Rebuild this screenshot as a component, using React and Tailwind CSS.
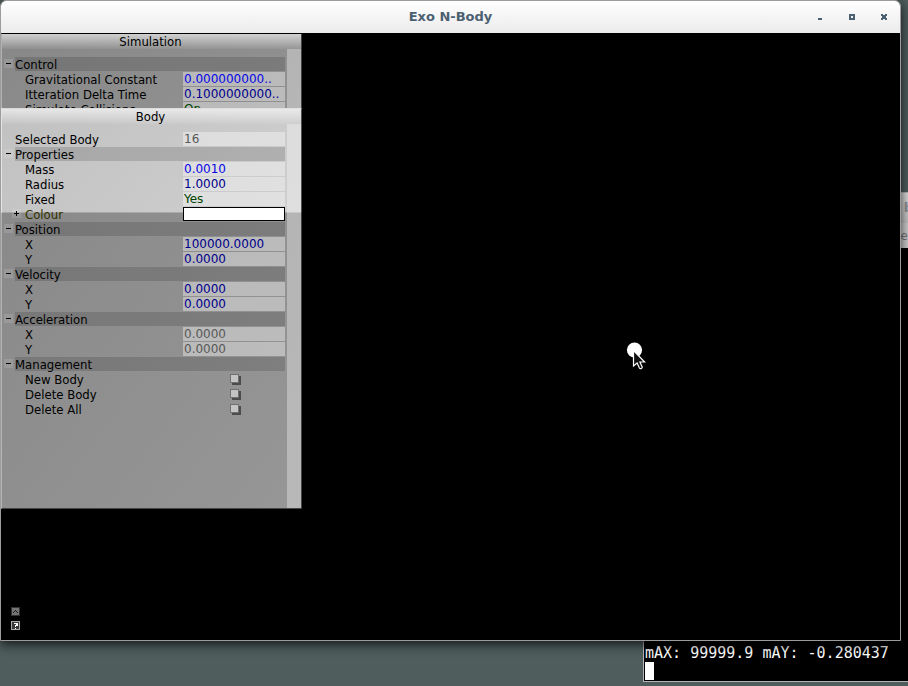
import React from "react";

const simulationRows = [
  { kind: "group", label: "Control" },
  { kind: "number", label: "Gravitational Constant", value: "0.000000000..", tone: "bright" },
  { kind: "number", label: "Itteration Delta Time", value: "0.1000000000..", tone: "blue" },
  { kind: "toggle", label: "Simulate Collisions", value: "On" },
];

const bodyRows = [
  { kind: "number", label: "Selected Body", value: "16", tone: "muted", top: true },
  { kind: "group", label: "Properties" },
  { kind: "number", label: "Mass", value: "0.0010", tone: "bright" },
  { kind: "number", label: "Radius", value: "1.0000", tone: "blue" },
  { kind: "toggle", label: "Fixed", value: "Yes" },
  { kind: "colour", label: "Colour" },
  { kind: "group", label: "Position" },
  { kind: "number", label: "X", value: "100000.0000", tone: "blue" },
  { kind: "number", label: "Y", value: "0.0000", tone: "blue" },
  { kind: "group", label: "Velocity" },
  { kind: "number", label: "X", value: "0.0000", tone: "blue" },
  { kind: "number", label: "Y", value: "0.0000", tone: "blue" },
  { kind: "group", label: "Acceleration" },
  { kind: "number", label: "X", value: "0.0000", tone: "muted" },
  { kind: "number", label: "Y", value: "0.0000", tone: "muted" },
  { kind: "group", label: "Management" },
  { kind: "action", label: "New Body" },
  { kind: "action", label: "Delete Body" },
  { kind: "action", label: "Delete All" },
];

const tones = {
  bright: "text-[#0808e8]",
  blue: "text-[#00008c]",
  muted: "text-[#585858]",
};

const valueBox =
  "h-[14px] w-[102px] shrink-0 bg-white/38 px-px text-left font-['DejaVu_Sans',sans-serif] text-[12px] leading-[15px] outline-none";

function Row({ row, id }) {
  if (row.kind === "group") {
    return (
      <button type="button" className="flex h-[15px] w-full items-start pl-[2px] text-left">
        <span className="mt-[2px] flex h-[9px] w-[9px] shrink-0 items-center justify-center bg-white/12">
          <span className="h-px w-[5px] bg-black" />
        </span>
        <span className="ml-[2px] h-[14px] flex-1 bg-black/14 leading-[15px]">{row.label}</span>
      </button>
    );
  }

  return (
    <div className={`flex h-[15px] items-start ${row.top ? "pl-[13px]" : row.kind === "colour" ? "pl-[10px]" : "pl-[23px]"}`}>
      {row.kind === "colour" && (
        <button
          type="button"
          aria-label="Expand colour"
          className="mt-[2px] mr-[4px] flex h-[9px] w-[9px] shrink-0 items-center justify-center bg-white/12"
        >
          <svg viewBox="0 0 5 5" className="h-[5px] w-[5px]" shapeRendering="crispEdges">
            <path d="M2 0h1v5h-1zM0 2h5v1h-5z" />
          </svg>
        </button>
      )}
      <label htmlFor={id} className={`flex-1 leading-[15px] ${row.kind === "colour" ? "text-[#333300]" : ""}`}>
        {row.label}
      </label>
      {row.kind === "number" && (
        <input id={id} className={`${valueBox} ${tones[row.tone]}`} defaultValue={row.value} readOnly={row.tone === "muted"} />
      )}
      {row.kind === "toggle" && (
        <button id={id} type="button" className={`${valueBox} text-[#004400]`}>
          {row.value}
        </button>
      )}
      {row.kind === "colour" && (
        <button id={id} type="button" className="h-[14px] w-[102px] shrink-0 border border-black bg-white" />
      )}
      {row.kind === "action" && (
        <span className="flex h-[14px] w-[102px] shrink-0 items-start justify-center pt-[2px]">
          <button
            id={id}
            type="button"
            className="h-[9px] w-[9px] border border-[#707070] bg-[#c4c4c4] shadow-[2px_2px_0_#4c4c4c]"
          />
        </span>
      )}
    </div>
  );
}

function TweakBar({ title, name, rows, className, bodyClassName }) {
  return (
    <section
      className={`absolute left-0 flex w-[301px] flex-col border border-r-black/50 border-b-black/50 border-l-white/30 bg-linear-to-br from-[#e6e6e6]/59 to-[#ffffff]/59 font-['DejaVu_Sans_Condensed','DejaVu_Sans',sans-serif] text-[13px] text-black ${className}`}
    >
      <h2 className="h-[15px] shrink-0 bg-linear-to-b from-white/60 to-white/5 pr-[2px] text-center leading-[15px]">{title}</h2>
      <div className={`flex min-h-0 flex-1 ${bodyClassName}`}>
        <div className="min-w-0 flex-1 overflow-hidden pt-[8px] pr-[2px]">
          {rows.map((row, i) => (
            <Row key={i} row={row} id={`${name}-${i}`} />
          ))}
        </div>
        <div className="w-[14px] shrink-0 bg-white/33" />
      </div>
    </section>
  );
}

function Terminal() {
  return (
    <section className="absolute top-[192px] right-0 bottom-[4px] left-[643px] flex flex-col overflow-hidden border-t border-b border-l border-[#b4b4b4] bg-black">
      <div className="flex h-[30px] shrink-0 items-center justify-end bg-linear-to-b from-[#dcdcdc] to-[#c4c4c4] font-['DejaVu_Sans',sans-serif] text-[13px] font-bold text-[#8d959c]">
        <span className="-mr-[5px]">b</span>
      </div>
      <div className="flex h-[25px] shrink-0 items-center justify-end bg-[#cfcfcf] font-['DejaVu_Sans',sans-serif] text-[12px] text-[#777777]">
        <span>le</span>
      </div>
      <div className="flex flex-1 flex-col justify-end pl-px font-['DejaVu_Sans_Mono',monospace] text-[15px] leading-[18px] text-white">
        <p className="whitespace-pre">mAX: 99999.9 mAY: -0.280437</p>
        <div className="mb-px h-[18px] w-[9px] bg-white" />
      </div>
    </section>
  );
}

function TitleBar() {
  return (
    <header className="grid h-[32px] shrink-0 grid-cols-[1fr_auto_1fr] items-center rounded-t-[5px] bg-linear-to-b from-white to-[#ebebeb]">
      <span />
      <h1 className="font-['DejaVu_Sans',sans-serif] text-[13px] font-bold text-[#4b6070]">Exo N-Body</h1>
      <div className="flex justify-end text-[#4b6070]">
        <button type="button" aria-label="Minimise" className="flex h-[32px] w-[32px] items-center justify-center">
          <svg viewBox="0 0 6 6" className="h-[6px] w-[6px]" shapeRendering="crispEdges" fill="currentColor">
            <path d="M1 4h4v2h-4z" />
          </svg>
        </button>
        <button type="button" aria-label="Maximise" className="flex h-[32px] w-[32px] items-center justify-center">
          <svg viewBox="0 0 6 6" className="h-[6px] w-[6px]" shapeRendering="crispEdges" fill="currentColor">
            <path fillRule="evenodd" d="M0 0h6v6h-6zM2 2v2h2v-2z" />
          </svg>
        </button>
        <button type="button" aria-label="Close" className="flex h-[32px] w-[32px] items-center justify-center">
          <svg viewBox="0 0 6 6" className="h-[6px] w-[6px]" shapeRendering="crispEdges" fill="currentColor">
            <path d="M0 0h2v1h2v-1h2v2h-1v2h1v2h-2v-1h-2v1h-2v-2h1v-2h-1z" />
          </svg>
        </button>
      </div>
    </header>
  );
}

export default function App() {
  return (
    <main className="relative h-screen overflow-hidden bg-[#4f5d5d]">
      <Terminal />
      <section className="absolute top-0 right-[7px] bottom-[45px] left-0 flex flex-col rounded-t-[6px] border border-[#9c9c9c] bg-black shadow-[0_3px_12px_rgba(0,0,0,0.8)]">
        <TitleBar />
        <div className="relative min-h-0 flex-1 bg-black">
          <TweakBar
            title="Simulation"
            name="simulation"
            rows={simulationRows}
            className="top-0 h-[180px] border-t-black"
            bodyClassName="max-h-[59px]"
          />
          <TweakBar title="Body" name="body" rows={bodyRows} className="top-[75px] h-[401px] border-t-white/30" bodyClassName="" />

          <svg viewBox="0 0 20 30" className="absolute top-[308px] left-[625px] h-[30px] w-[20px]" aria-hidden="true">
            <circle cx="8.5" cy="9" r="7.6" fill="#fff" />
            <path
              d="M7.500 9.500v15.500l3.600-3 2.300 5c.8 1.300 3.300.3 2.700-1.300l-2.200-4.700h4.800z"
              fill="#111"
              stroke="#fff"
              strokeWidth="1.200"
            />
          </svg>

          <div className="absolute bottom-[10px] left-[10px] flex flex-col gap-[5px]">
            <button type="button" aria-label="Restore bars" className="h-[9px] w-[9px]">
              <svg viewBox="0 0 9 9" className="h-[9px] w-[9px]" shapeRendering="crispEdges">
                <path fill="#333" d="M0 0h9v9h-9z" />
                <path fill="#757575" d="M1 1h7v7h-7z" />
                <path fill="#1c1c1c" d="M4 3h1v1h-1zM3 4h1v1h-1zM5 4h1v1h-1zM2 5h1v1h-1zM6 5h1v1h-1z" />
              </svg>
            </button>
            <button type="button" aria-label="Help" className="h-[9px] w-[9px]">
              <svg viewBox="0 0 9 9" className="h-[9px] w-[9px]" shapeRendering="crispEdges">
                <path fill="#a8a8a8" d="M0 0h9v9h-9z" />
                <path fill="#383838" d="M1 1h7v7h-7z" />
                <path fill="#fff" d="M3 2h4v3h-2v1h-1v-2h1v-1h-2zM4 7h1v1h-1z" />
              </svg>
            </button>
          </div>
        </div>
      </section>
    </main>
  );
}
